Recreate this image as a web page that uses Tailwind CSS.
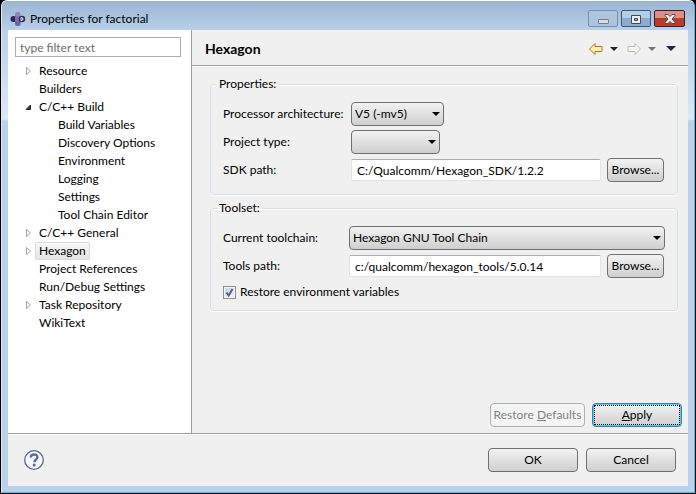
<!DOCTYPE html>
<html lang="en">
<head>
<meta charset="utf-8">
<title>Properties for factorial</title>
<script src="https://cdn.jsdelivr.net/npm/@tailwindcss/browser@4"></script>
</head>
<body class="bg-black font-[Lato,'Noto_Sans',sans-serif] text-xs text-black">
<main class="flex h-screen min-h-[494px] flex-col pl-px pr-px pb-px">
<div class="flex flex-1 flex-col rounded-t-md border-t border-r border-b border-l border-t-white border-l-[#dce9f6] border-r-[#2cc8ea] border-b-[#2cc8ea] bg-[linear-gradient(#9ab5d3_0,#b9d1ea_30px,#dce9f6_118px,#b9d1ea_120px)] px-1.5 pb-[6px]">
  <header class="flex h-[29px] items-center pt-1.5">
    <svg class="ml-0.5 h-4 w-4 shrink-0" viewBox="0 0 16 16" aria-hidden="true">
      <rect x="5" y="1" width="5.500" height="7" rx="2.500" fill="#8f86b5"/><rect x="5" y="7" width="5.500" height="8" rx="2.500" fill="#6b62a0"/>
      <circle cx="3.500" cy="8" r="3" fill="#2b2560"/><path d="M5 5.500h5v5h-5z" fill="#7a71a8"/><circle cx="12" cy="8" r="3.200" fill="#2b2560"/><path d="M11 6.500v3h.500q1.500 0 1.500-1.500t-1.500-1.500z" fill="#2b2560" stroke="#fff"/>
    </svg>
    <h1 class="ml-1 flex-1">Properties for factorial</h1>
    <div class="mr-[3px] flex gap-[3px]">
      <button aria-label="Minimize" class="flex h-[17px] w-[30px] items-center justify-center rounded-xs border border-[#7890ae] bg-linear-to-b from-[#b0c6df] to-[#a9c3e0]"><svg class="h-3 w-3" viewBox="0 0 12 12"><rect x="1.500" y="6.500" width="10" height="4" rx=".5" fill="#ddd" stroke="#777b85"/></svg></button>
      <button aria-label="Maximize" class="flex h-[17px] w-[30px] items-center justify-center rounded-xs border border-[#3f5579] bg-linear-to-b from-[#b7cde6] from-50% to-[#8cabd0] to-50%"><svg class="h-3 w-3" viewBox="0 0 12 12"><path fill-rule="evenodd" d="M1.500 2.500h9v8h-9zM4.500 5.500h3v2h-3z" fill="#eee" stroke="#454a5a"/></svg></button>
      <button aria-label="Close" class="flex h-[17px] w-[31px] items-center justify-center rounded-xs border border-[#4b1420] bg-linear-to-b from-[#d99085] from-45% to-[#b83c28] to-50%"><svg class="h-3 w-3" viewBox="0 0 12 12"><path d="M1 1.500h3l2 2 2-2h3v1l-3 3.500 3 3.500v1h-3l-2-2-2 2h-3v-1l3-3.500-3-3.500z" fill="#eee" stroke="#5b4650"/></svg></button>
    </div>
  </header>
  <div class="flex flex-1 flex-col bg-[#f0f0f0]">
    <div class="flex flex-1">
      <nav aria-label="Property pages" class="w-[184px] shrink-0 border-r border-[#a0a0a0] bg-white pt-[7px] pl-[7px]">
        <input type="text" aria-label="Filter" placeholder="type filter text" class="mb-[5px] block h-5 w-[166px] border border-[#abadb3] bg-white px-1 placeholder:text-[#6d6d6d]">
        <ul class="leading-[18px]">
          <li class="flex"><button aria-label="Expand Resource" class="w-6 pl-2.5"><svg class="h-3 w-2" viewBox="0 0 8 12"><path d="M1.500 2.500v7l4-3.500z" fill="#fff" stroke="#a6a6a6"/></svg></button><a href="#">Resource</a></li>
          <li class="pl-6"><a href="#">Builders</a></li>
          <li><div class="flex"><button aria-label="Collapse C/C++ Build" class="w-6 pl-2.5"><svg class="h-3 w-2" viewBox="0 0 8 12"><path d="M5.500 4v4.500h-4.500z" fill="#404040" stroke="#262626"/></svg></button><a href="#">C/C++ Build</a></div>
            <ul class="pl-[43px]">
              <li><a href="#">Build Variables</a></li>
              <li><a href="#">Discovery Options</a></li>
              <li><a href="#">Environment</a></li>
              <li><a href="#">Logging</a></li>
              <li><a href="#">Settings</a></li>
              <li><a href="#">Tool Chain Editor</a></li>
            </ul></li>
          <li class="flex"><button aria-label="Expand C/C++ General" class="w-6 pl-2.5"><svg class="h-3 w-2" viewBox="0 0 8 12"><path d="M1.500 2.500v7l4-3.500z" fill="#fff" stroke="#a6a6a6"/></svg></button><a href="#">C/C++ General</a></li>
          <li class="flex h-[18px]"><button aria-label="Expand Hexagon" class="w-5 pl-2.5"><svg class="h-3 w-2" viewBox="0 0 8 12"><path d="M1.500 2.500v7l4-3.500z" fill="#fff" stroke="#a6a6a6"/></svg></button><a href="#" aria-current="page" class="rounded-xs border border-[#d9d9d9] bg-linear-to-b from-[#f8f8f8] to-[#e5e5e5] px-[3px] leading-4">Hexagon</a></li>
          <li class="pl-6"><a href="#">Project References</a></li>
          <li class="pl-6"><a href="#">Run/Debug Settings</a></li>
          <li class="flex"><button aria-label="Expand Task Repository" class="w-6 pl-2.5"><svg class="h-3 w-2" viewBox="0 0 8 12"><path d="M1.500 2.500v7l4-3.500z" fill="#fff" stroke="#a6a6a6"/></svg></button><a href="#">Task Repository</a></li>
          <li class="pl-6"><a href="#">WikiText</a></li>
        </ul>
      </nav>
      <section class="flex flex-1 flex-col">
        <div class="flex h-9 items-center border-b border-[#a0a0a0] pt-0.5 pr-3 pl-[13px] shadow-[0_1px_0_#fff]">
          <h2 class="flex-1 text-sm font-bold">Hexagon</h2>
          <button aria-label="Back"><svg class="h-3.5 w-4" viewBox="0 0 16 14"><path d="M1.500 7l5.500-5.500v3h7v5h-7v3z" fill="#fdf0b0" stroke="#b37a14"/></svg></button>
          <button aria-label="Back history" class="ml-1.5"><svg class="h-2 w-2" viewBox="0 0 8 8"><path d="M0 2h8l-4 4z" fill="#222"/></svg></button>
          <button aria-label="Forward" class="ml-2"><svg class="h-3.5 w-4" viewBox="0 0 16 14"><path d="M14.500 7l-5.500-5.500v3h-7v5h7v3z" fill="#f6f6f2" stroke="#bdbdb5"/></svg></button>
          <button aria-label="Forward history" class="ml-1.5"><svg class="h-2 w-2" viewBox="0 0 8 8"><path d="M0 2h8l-4 4z" fill="#777"/></svg></button>
          <button aria-label="Menu" class="ml-2.5"><svg class="h-2 w-2.5" viewBox="0 0 10 8"><path d="M0 1h10l-5 5z" fill="#26234f"/></svg></button>
        </div>
        <form id="page" class="flex flex-1 flex-col gap-[5px] pt-2.5 pr-2.5 pl-[18px]">
          <fieldset class="rounded-sm border border-[#d5dfe5] pt-2.5 pr-3 pb-3 pl-3 shadow-[0_1px_0_#fff,inset_0_1px_0_#fff]">
            <legend class="-ml-1.5 px-0.5 leading-4">Properties:</legend>
            <div class="grid grid-cols-[128px_1fr] items-center gap-y-1">
              <label for="arch" class="whitespace-nowrap">Processor architecture:</label>
              <div class="relative w-[93px]"><select id="arch" class="block h-6 w-full appearance-none rounded-sm border border-[#707070] bg-linear-to-b from-[#f2f2f2] to-[#cfcfcf] px-[3px]"><option>V5 (-mv5)</option></select><svg class="pointer-events-none absolute top-2 right-1 h-2 w-2" viewBox="0 0 8 8"><path d="M0 2h8l-4 4z"/></svg></div>
              <label for="ptype">Project type:</label>
              <div class="relative w-[89px]"><select id="ptype" class="block h-6 w-full appearance-none rounded-sm border border-[#707070] bg-linear-to-b from-[#f2f2f2] to-[#cfcfcf] px-[3px]"><option></option></select><svg class="pointer-events-none absolute top-2 right-1 h-2 w-2" viewBox="0 0 8 8"><path d="M0 2h8l-4 4z"/></svg></div>
              <label for="sdk">SDK path:</label>
              <div class="flex items-center gap-1.5 pr-px"><input id="sdk" type="text" value="C:/Qualcomm/Hexagon_SDK/1.2.2" class="h-[22px] min-w-0 flex-1 rounded-xs border border-[#e2e3ea] border-t-[#abadb3] bg-white px-[5px]"><button type="button" class="h-6 w-[57px] rounded-sm border border-[#707070] bg-linear-to-b from-[#f2f2f2] to-[#cfcfcf]">Browse...</button></div>
            </div>
          </fieldset>
          <fieldset class="rounded-sm border border-[#d5dfe5] pt-2.5 pr-3 pb-2 pl-3 shadow-[0_1px_0_#fff,inset_0_1px_0_#fff]">
            <legend class="-ml-1.5 px-0.5 leading-4">Toolset:</legend>
            <div class="grid grid-cols-[126px_1fr] items-center gap-y-1">
              <label for="chain">Current toolchain:</label>
              <div class="relative"><select id="chain" class="block h-6 w-full appearance-none rounded-sm border border-[#707070] bg-linear-to-b from-[#f2f2f2] to-[#cfcfcf] px-[3px]"><option>Hexagon GNU Tool Chain</option></select><svg class="pointer-events-none absolute top-2 right-1 h-2 w-2" viewBox="0 0 8 8"><path d="M0 2h8l-4 4z"/></svg></div>
              <label for="tools">Tools path:</label>
              <div class="flex items-center gap-1.5 pr-px"><input id="tools" type="text" value="c:/qualcomm/hexagon_tools/5.0.14" class="h-[22px] min-w-0 flex-1 rounded-xs border border-[#e2e3ea] border-t-[#abadb3] bg-white px-[5px]"><button type="button" class="h-6 w-[57px] rounded-sm border border-[#707070] bg-linear-to-b from-[#f2f2f2] to-[#cfcfcf]">Browse...</button></div>
              <label class="col-span-2 flex h-5 items-center gap-1"><span class="relative"><input type="checkbox" checked class="peer block h-[13px] w-[13px] appearance-none border border-[#8e8f8f] bg-linear-to-br from-[#c9ced6] to-[#f6f6f6] shadow-[inset_0_0_0_1px_#f4f4f4]"><svg class="pointer-events-none invisible absolute inset-0 h-[13px] w-[13px] peer-checked:visible" viewBox="0 0 13 13"><path d="M3.500 6.500l2.200 3 3.800-6.500" fill="none" stroke="#4a5f97" stroke-width="2"/></svg></span>Restore environment variables</label>
            </div>
          </fieldset>
          <div class="-mr-1 mt-auto mb-1.5 flex justify-end gap-[7px]">
            <button type="reset" disabled class="h-6 w-[95px] rounded-sm border border-[#adb2b5] bg-[#f4f4f4] text-[#838383]">Restore <u>D</u>efaults</button>
            <button type="button" class="h-6 w-[90px] rounded-sm border border-[#3c7fb1] bg-linear-to-b from-[#f2f2f2] to-[#cfcfcf] p-px shadow-[inset_0_0_0_1px_#48d1f5]"><span class="flex h-full items-center justify-center border border-dotted border-black"><span><u>A</u>pply</span></span></button>
          </div>
        </form>
      </section>
    </div>
    <footer class="flex h-[53px] items-center gap-2 border-t border-[#a0a0a0] pr-3 pl-4 shadow-[inset_0_1px_0_#fff]">
      <button aria-label="Help" class="mr-auto"><svg class="h-5 w-5" viewBox="0 0 20 20"><circle cx="10" cy="10" r="9.300" fill="#f4f6fa" stroke="#5b6b8c" stroke-width="1.300"/><path d="M6.800 7.600c0-4.200 6.600-4 6.600-.4 0 2.200-3 2.300-3 5" fill="none" stroke="#5b6b8c" stroke-width="2.400"/><circle cx="10.200" cy="15" r="1.500" fill="#5b6b8c"/></svg></button>
      <button type="submit" form="page" class="h-6 w-[90px] rounded-sm border border-[#707070] bg-linear-to-b from-[#f2f2f2] to-[#cfcfcf]">OK</button>
      <button type="button" class="h-6 w-[90px] rounded-sm border border-[#707070] bg-linear-to-b from-[#f2f2f2] to-[#cfcfcf]">Cancel</button>
    </footer>
  </div>
</div>
</main>
</body>
</html>
